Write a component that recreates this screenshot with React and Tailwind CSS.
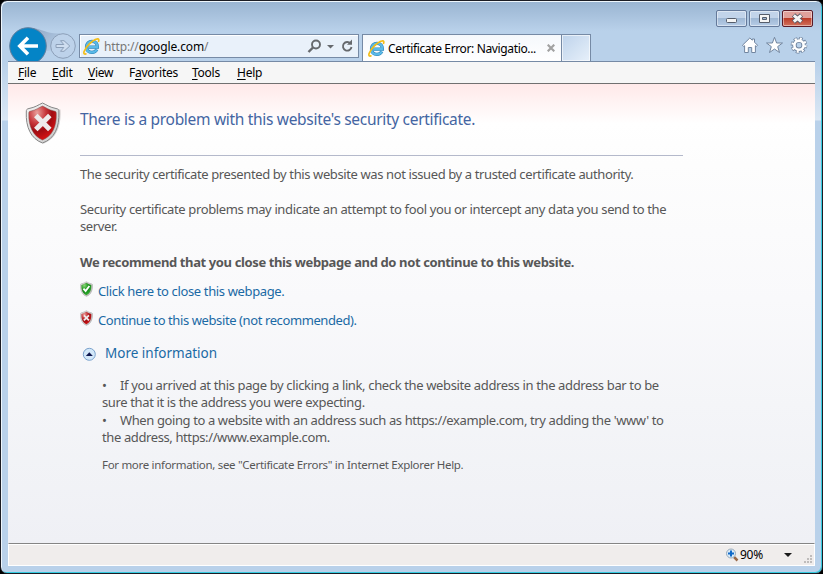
import React from 'react';

const Shield = ({ ok, className }) => (
  <svg viewBox="0 0 36 42" className={className}>
    <defs>
      <radialGradient id={ok ? 'sg' : 'sr'} cx="0.3" cy="0.2" r="0.9">
        <stop offset="0" stopColor={ok ? '#8ed67c' : '#e9a09c'} />
        <stop offset="0.35" stopColor={ok ? '#2fa32c' : '#c8383c'} />
        <stop offset="0.6" stopColor={ok ? '#178a1b' : '#a00c12'} />
        <stop offset="1" stopColor={ok ? '#3cc63c' : '#e81414'} />
      </radialGradient>
      <linearGradient id={ok ? 'rg' : 'rr'} x1="0" y1="0" x2="1" y2="1">
        <stop offset="0" stopColor="#f4f4f4" />
        <stop offset="0.5" stopColor="#e0e0e0" />
        <stop offset="1" stopColor="#c5c5c5" />
      </linearGradient>
    </defs>
    <path d="M19 2.5C15 5.5 9 6.5 3.5 6.5C2 22 5 36 18.500 41.800C33 36 36.500 22 35.500 7.500C29 6.500 23 5.500 19 2.500Z" fill="#000" opacity="0.15" />
    <path d="M17.500 1C14 2.500 10 5.500 4 6.500C1.800 7 1.300 7.500 1.300 10C.6 25 6 37 17.500 41C29.500 37 34.600 25 33.900 10C33.900 7.500 33.500 7 31 6.500C25 5.500 21 2.500 17.500 1Z" fill={ok ? 'url(#rg)' : 'url(#rr)'} stroke="#858585" strokeWidth="1" />
    <path d="M17.500 4C14 5.500 11 8 6 9C4 9.400 3.800 9.700 3.800 12C3.400 24 8 34 17.500 38C27.500 34 31.700 24 31.300 12C31.300 9.700 31 9.400 29 9C24 8 21 5.500 17.500 4Z" fill={ok ? 'url(#sg)' : 'url(#sr)'} stroke="#7a5552" strokeWidth="0.500" />
    {ok ? (
      <path d="M9.500 20L15.500 26.500L26 12.500" fill="none" stroke="#fff" strokeWidth="5" />
    ) : (
      <path d="M10.800 13.500L24.800 27.500M24.800 13.500L10.800 27.500" fill="none" stroke="#eeecec" strokeWidth="5" />
    )}
  </svg>
);

const IELogo = () => (
  <svg viewBox="0 0 17 17" className="h-[17px] w-[17px] shrink-0">
    <path d="M13.800 11.600C12.700 13.700 11 14.400 9 14.400C5.600 14.400 3.500 12.200 3.500 9C3.500 5.600 5.800 3.400 9 3.400C12.700 3.400 14.600 5.800 14.400 9.200H5.500" fill="none" stroke="#2781b5" strokeWidth="3.300" />
    <path d="M13.800 11.600C12.700 13.700 11 14.400 9 14.400C5.600 14.400 3.500 12.200 3.500 9C3.500 5.600 5.800 3.400 9 3.400C12.700 3.400 14.600 5.800 14.400 9.200H5.500" fill="none" stroke="#59b9e8" strokeWidth="2.200" />
    <path d="M3.500 15.600C1.500 16.600 .4 15.800 1.100 13.500C2.700 8.700 9.300 2 13.900 1C16 .6 16.200 2.100 15.300 4" fill="none" stroke="#f3bd18" strokeWidth="1.700" />
  </svg>
);

const NavButtons = () => (
  <svg viewBox="8 26 71 36" className="-mt-[8px] h-[36px] w-[71px] shrink-0">
    <defs>
      <linearGradient id="nb" x1="0" y1="0" x2="1" y2="1">
        <stop offset="0" stopColor="#8fa6c4" />
        <stop offset="1" stopColor="#b9d1ea" />
      </linearGradient>
    </defs>
    <path d="M32 28C43 29 46 34 60 33.500L54 50L40 52Z" fill="url(#nb)" />
    <circle cx="63" cy="46" r="12.300" fill="#bdd2ea" stroke="#8c9fb8" />
    <path d="M56 44.500H63.800L60.500 40.700H64L69.800 46L64 51.300H60.500L63.800 47.500H56Z" fill="#cfdef0" stroke="#8c9fb8" strokeWidth="1" />
    <circle cx="28" cy="46" r="18.300" fill="#0484c6" stroke="#627f9e" strokeWidth="1" />
    <path d="M38 46H20.500M28 37.700L19.800 46L28 54.300" fill="none" stroke="#fff" strokeWidth="3.600" />
  </svg>
);

const Caption = ({ red, children }) => (
  <div className={`flex h-[17px] w-[31px] items-center justify-center rounded-[2px] border shadow-[inset_0_0_0_1px_rgba(255,255,255,0.45)] ${red ? 'border-[#5a1a27] bg-linear-to-b from-[#e0a19b] from-45% via-[#bc3c28] via-50% to-[#d0705c]' : 'border-[#64799a] bg-linear-to-b from-[#c2d4ea] from-45% via-[#9fb8d5] via-50% to-[#b6cce6]'}`}>
    {children}
  </div>
);

const menus = [
  ['', 'F', 'ile', 'w-[34px]'],
  ['', 'E', 'dit', 'w-[36px]'],
  ['', 'V', 'iew', 'w-[41px]'],
  ['F', 'a', 'vorites', 'w-[63px]'],
  ['', 'T', 'ools', 'w-[45px]'],
  ['', 'H', 'elp', 'w-[40px]'],
];

export default function App() {
  return (
    <div className="h-[574px] w-[823px] overflow-hidden bg-black font-['Noto_Sans','Open_Sans',sans-serif]">
      <div className="flex h-[574px] flex-col rounded-[7px] border border-[#1b1c24] bg-[linear-gradient(to_bottom,#99b4d1_0,#b9d1ea_30px,#b9d1ea_62px,#dbe7f4_119px,#b9d1ea_120px)] shadow-[inset_1px_1px_0_#eef6fc,inset_-1px_-1px_0_#35cbe0]">
        <div className="flex h-[33px] shrink-0 justify-end gap-[2px] pt-[9px] pr-[9px]">
          <Caption>
            <svg viewBox="0 0 29 15" className="h-[15px] w-[29px]"><rect x="9.500" y="7.500" width="10" height="4" rx="1" fill="#f5f5f5" stroke="#555d6b" /></svg>
          </Caption>
          <Caption>
            <svg viewBox="0 0 29 15" className="h-[15px] w-[29px]"><path d="M9.500 3.500H19.500V11.500H9.500ZM12.500 6.500V8.500H16.500V6.500Z" fill="#f5f5f5" fillRule="evenodd" stroke="#555d6b" /></svg>
          </Caption>
          <Caption red>
            <svg viewBox="0 0 29 15" className="h-[15px] w-[29px]"><path d="M10.500 4L18.500 11M18.500 4L10.500 11" stroke="#5b5964" strokeWidth="4.800" /><path d="M10.800 4.300L18.200 10.700M18.200 4.300L10.800 10.700" stroke="#f5f5f5" strokeWidth="2.900" /></svg>
          </Caption>
        </div>
        <div className="flex h-[27px] shrink-0 pl-[7px]">
          <NavButtons />
          <div className="flex h-[24px] w-[280px] shrink-0 items-center border border-[#768aa5] bg-[#e9f1fa] pl-[3px] shadow-[inset_1px_1px_0_#fff]">
            <IELogo />
            <div className="ml-[4px] w-[215px] pt-px text-[12px] tracking-[-0.13px] whitespace-nowrap text-[#777]">http://<span className="text-black">google.com</span>/</div>
            <svg viewBox="306 38 50 18" className="-ml-[13px] h-[18px] w-[50px] shrink-0">
              <circle cx="316" cy="45.500" r="4" fill="none" stroke="#66696d" strokeWidth="1.900" />
              <path d="M313 48.500L308.500 53" stroke="#66696d" strokeWidth="2.400" />
              <path d="M327 46H334L330.500 49.500Z" fill="#66696d" />
              <path d="M350.500 44.500A4.300 4.300 0 1 0 351.500 48" fill="none" stroke="#66696d" strokeWidth="1.900" />
              <path d="M347 45.800H352V40.500Z" fill="#66696d" />
            </svg>
          </div>
          <div className="ml-[3px] flex h-[27px] w-[200px] items-center border border-b-0 border-[#768aa5] bg-linear-to-b from-[#f5f8fc] to-white pl-[5px]">
            <IELogo />
            <div className="ml-[3px] w-[159px] pt-px text-[12px] whitespace-nowrap text-black"><span className="tracking-[-0.36px]">Certificate Error: Navigatio...</span></div>
            <svg viewBox="0 0 8 8" className="h-[8px] w-[8px] shrink-0"><path d="M.7 .7L7.300 7.300M7.300 .7L.7 7.300" stroke="#a2a2a2" strokeWidth="2.200" /></svg>
          </div>
          <div className="h-[27px] w-[29px] border border-b-0 border-l-0 border-[#768aa5] bg-linear-to-br from-[#bed3eb] to-[#e7f0fa] shadow-[inset_0_0_0_1px_rgba(255,255,255,0.6)]" />
          <svg viewBox="740 34 68 24" className="mr-[14px] ml-auto h-[24px] w-[68px]">
            <g fill="#fff" stroke="#71859f" strokeWidth="1">
              <path d="M749.800 38L742.500 45.200L743.600 46.500L744.600 45.700V52.500H748.300V47.500H751.700V52.500H755.400V45.700L756.400 46.500L757.500 45.200L754.500 42.200V39H752.300V40.200Z" />
              <path d="M774.500 37.300L776.600 43H782.500L777.700 46.600L779.500 52.500L774.500 49L769.500 52.500L771.300 46.600L766.500 43H772.400Z" />
            </g>
            <g transform="translate(799 45.200)">
              <circle r="6.400" fill="none" stroke="#71859f" strokeWidth="3.800" strokeDasharray="3.400 1.627" strokeDashoffset="0.700" />
              <circle r="4.600" fill="none" stroke="#71859f" strokeWidth="4.400" />
              <circle r="6.400" fill="none" stroke="#fff" strokeWidth="2.600" strokeDasharray="2 3.027" />
              <circle r="4.600" fill="none" stroke="#fff" strokeWidth="2.600" />
            </g>
          </svg>
        </div>
        <div className="mr-[7px] ml-[7px] flex h-[505px] flex-col">
          <div className="flex h-[23px] shrink-0 items-center border-t border-b border-t-[#768aa5] border-b-[#707070] bg-[#f6f6f6] pt-px pl-[10px] text-[12px] text-black">
            {menus.map(([a, b, c, w]) => (
              <div key={b} className={`${w} tracking-[-0.25px] whitespace-nowrap`}>{a}<span className="underline underline-offset-2">{b}</span>{c}</div>
            ))}
          </div>
          <main className="h-[459px] shrink-0 bg-[linear-gradient(to_bottom,#ffe9e9_0,#fff_40px,#fdfdfd_80px,#f9f9fb_215px,#f4f5f8_320px,#eff0f5_459px)] text-[13px] leading-[17px] whitespace-nowrap text-[#575757]">
            <div className="flex h-[71px]">
              <Shield className="mt-[18px] ml-[17px] h-[42px] w-[36px]" />
              <h1 className="mt-[23px] ml-[19px] text-[15.500px] leading-[24px] tracking-[-0.31px] text-[#4465a2]">There is a problem with this website's security certificate.</h1>
            </div>
            <div className="ml-[72px] w-[603px] border-t border-[#b4b9cb]">
              <p className="mt-[10px] tracking-[-0.39px]">The security certificate presented by this website was not issued by a trusted certificate authority.</p>
              <p className="mt-[18px] tracking-[-0.365px]">Security certificate problems may indicate an attempt to fool you or intercept any data you send to the<br />server.</p>
              <p className="mt-[19px] font-bold tracking-[-0.38px]">We recommend that you close this webpage and do not continue to this website.</p>
              <div className="mt-[12px] flex h-[17px] text-[#1b6aa5]"><Shield ok className="-mt-[2px] mr-[5px] h-[16px] w-[13px]" /><span className="tracking-[-0.36px]">Click here to close this webpage.</span></div>
              <div className="mt-[12px] flex h-[17px] text-[#1b6aa5]"><Shield className="-mt-[2px] mr-[5px] h-[16px] w-[13px]" /><span className="tracking-[-0.4px]">Continue to this website (not recommended).</span></div>
              <div className="mt-[16px] flex h-[17px] text-[#1b6aa5]">
                <svg viewBox="0 0 14 14" className="mt-[2px] ml-[2px] mr-[9px] h-[14px] w-[14px]"><circle cx="7.300" cy="7.300" r="6" fill="#d3e8f9" stroke="#7ba2cc" /><path d="M3.800 9H10.800L7.300 5.300Z" fill="#10184f" /></svg>
                <span className="text-[13.500px]">More information</span>
              </div>
              <div className="mt-[15px] ml-[22px]">
                <p className="tracking-[-0.365px]"><span className="inline-block w-[18px]">•</span>If you arrived at this page by clicking a link, check the website address in the address bar to be<br />sure that it is the address you were expecting.</p>
                <p className="mt-[1px] tracking-[-0.39px]"><span className="inline-block w-[18px]">•</span>When going to a website with an address such as https://example.com, try adding the 'www' to<br />the address, https://www.example.com.</p>
                <p className="mt-[10px] text-[11.500px] tracking-[-0.31px]">For more information, see "Certificate Errors" in Internet Explorer Help.</p>
              </div>
            </div>
          </main>
          <footer className="flex h-[23px] shrink-0 items-center border border-t-[#858585] border-r-white border-b-white border-l-white bg-[#f0edec] shadow-[inset_0_1px_0_#fff]">
            <svg viewBox="725 546 14 15" className="ml-[716px] h-[15px] w-[14px]">
              <path d="M734 556L737.500 559.500" stroke="#9a6a49" strokeWidth="2.500" />
              <circle cx="731" cy="552.500" r="4.500" fill="#dcecf8" stroke="#98a9b9" />
              <path d="M731 549.500V555.500M728 552.500H734" stroke="#1069c8" strokeWidth="2" />
            </svg>
            <span className="ml-[1px] w-[44px] text-[12px] tracking-[-0.25px] text-black">90%</span>
            <svg viewBox="0 0 8 4" className="h-[4px] w-[8px]"><path d="M0 0H8L4 4Z" fill="#1a1a1a" /></svg>
            <svg viewBox="0 0 9 9" className="mt-auto mr-[1px] mb-[1px] ml-auto h-[9px] w-[9px]">
              <path d="M6 0H8V2H6ZM3 3H5V5H3ZM6 3H8V5H6ZM0 6H2V8H0ZM3 6H5V8H3ZM6 6H8V8H6Z" fill="#bfbcbb" />
            </svg>
          </footer>
        </div>
      </div>
    </div>
  );
}
